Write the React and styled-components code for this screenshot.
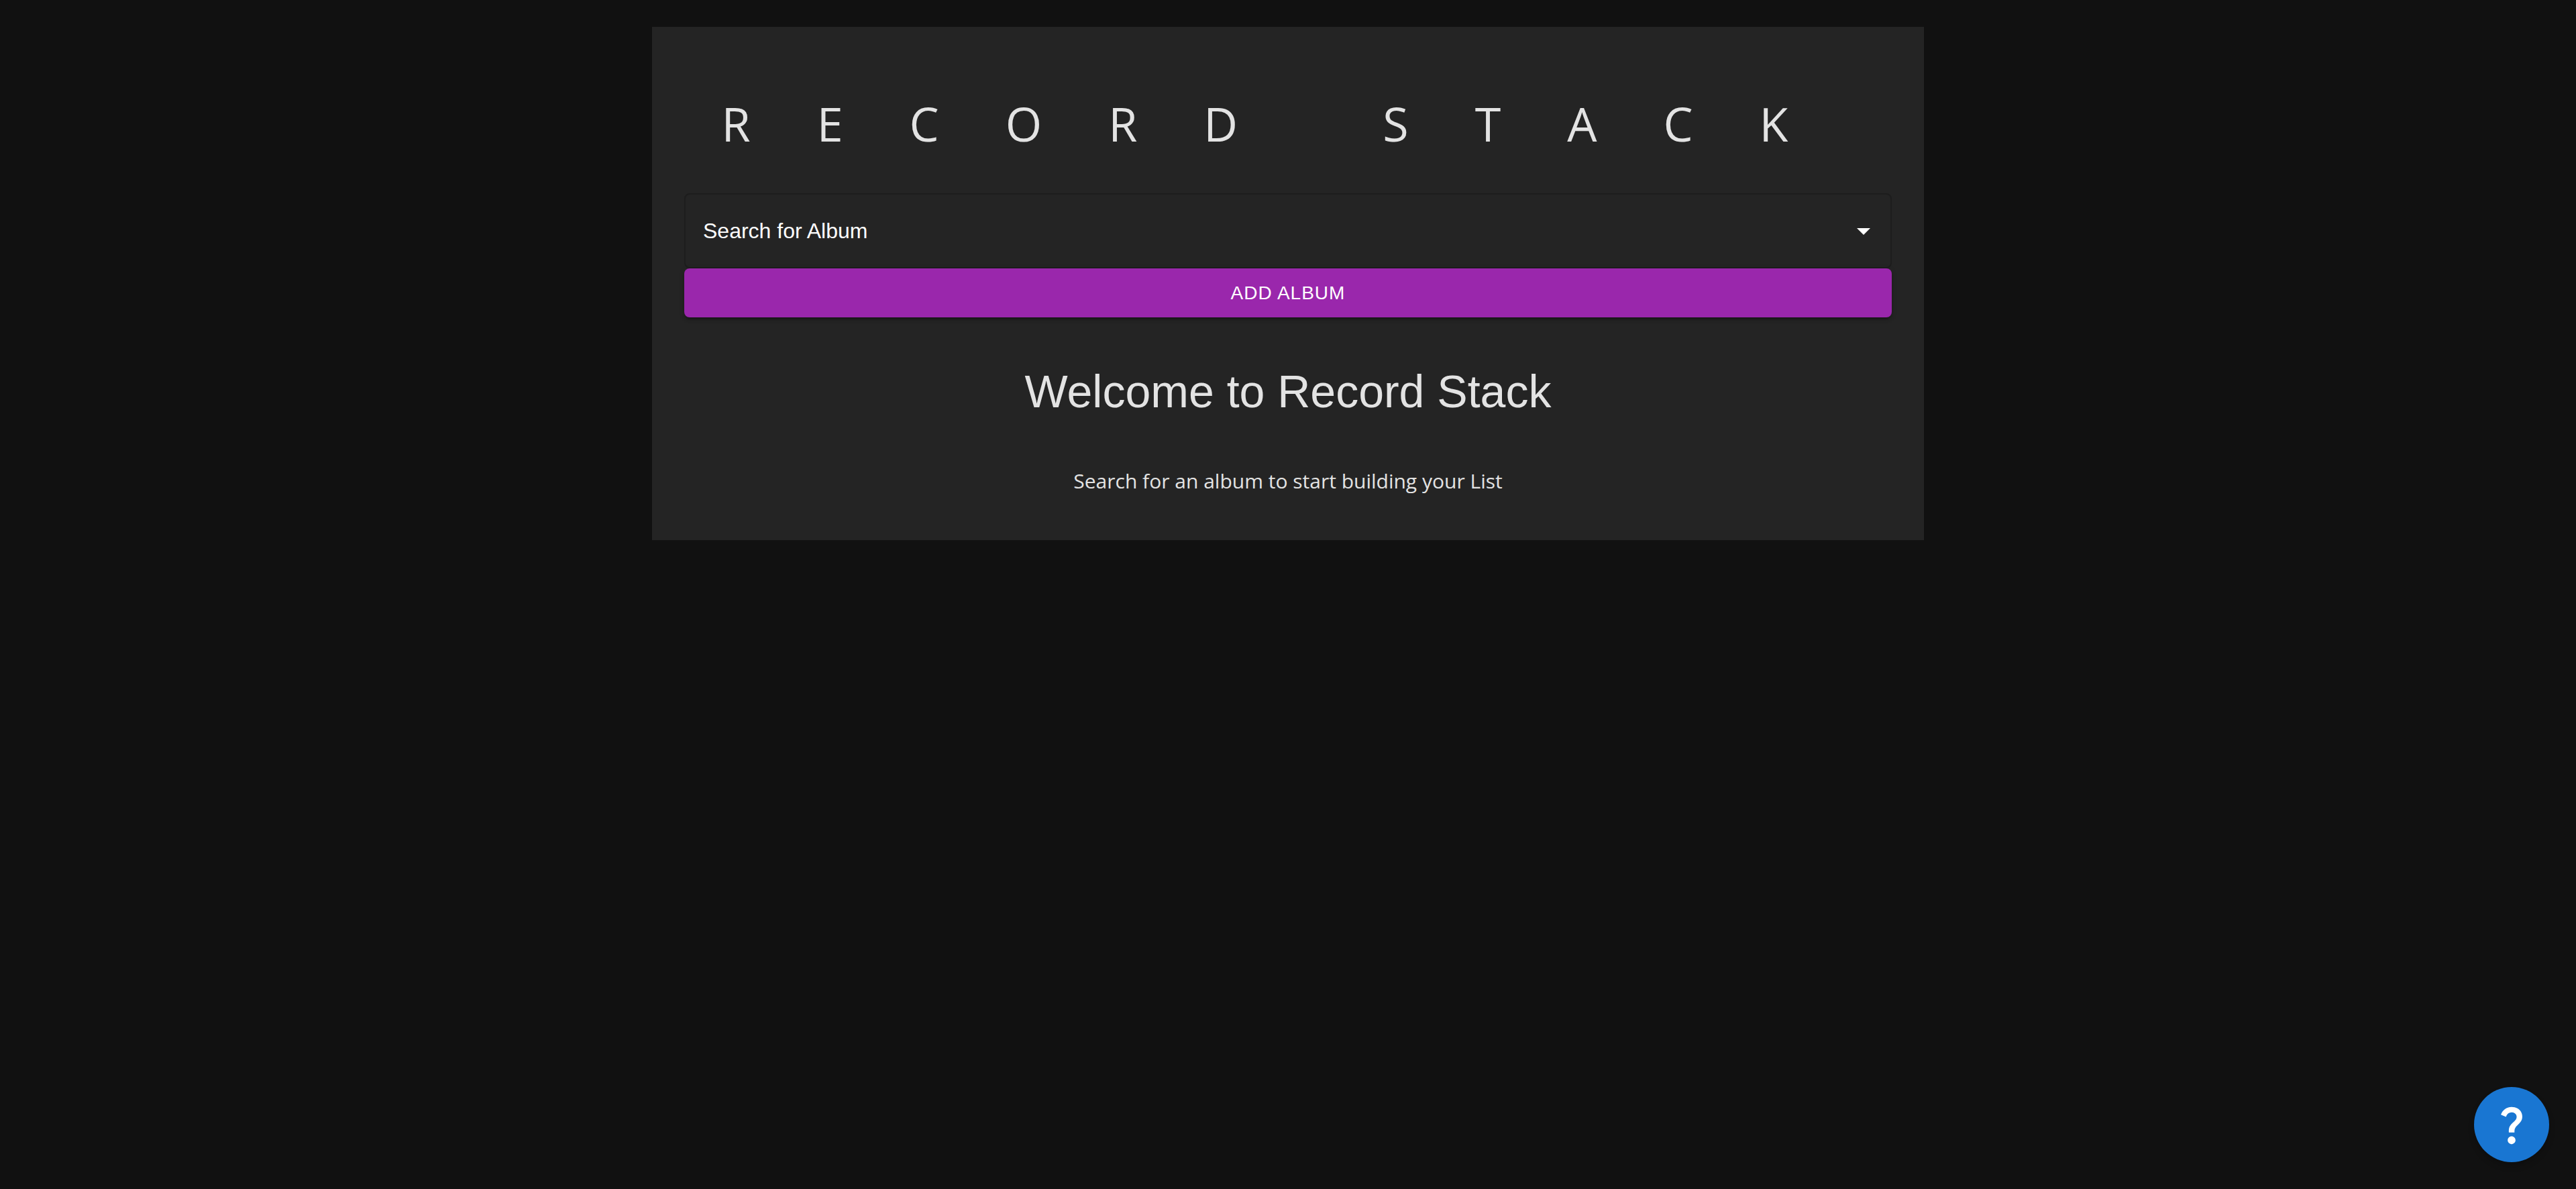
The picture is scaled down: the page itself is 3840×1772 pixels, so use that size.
import React from "react";
import styled, { createGlobalStyle } from "styled-components";

const sans = '"Liberation Sans", Arial, sans-serif';
const humanist = '"Open Sans", "Noto Sans", sans-serif';

const GlobalStyle = createGlobalStyle`
  *, *::before, *::after { box-sizing: border-box; }
  body {
    margin: 0;
    background: #111111;
    color: #e3e3e3;
    font-family: ${humanist};
    font-size: 30px;
  }
`;

const Page = styled.div`
  min-height: 100vh;
  padding: 40px;
`;

const Card = styled.main`
  display: flex;
  flex-direction: column;
  max-width: 1896px;
  margin: 0 auto;
  padding: 48px;
  background: #242424;
  text-align: center;
`;

const Title = styled.h1`
  margin: 48px 0 56px;
  font-size: 70px;
  font-weight: 400;
  line-height: 96px;
  letter-spacing: 99px;
  white-space: nowrap;
`;

const Form = styled.form`
  display: flex;
  flex-direction: column;
`;

const Field = styled.div`
  display: flex;
  align-items: center;
  height: 112px;
  padding: 0 16px 0 26px;
  border: 2px solid #1d1d1d;
  border-radius: 8px;
`;

const SearchInput = styled.input`
  flex: 1;
  min-width: 0;
  padding: 0;
  border: 0;
  outline: 0;
  background: transparent;
  color: #ffffff;
  font-family: ${sans};
  font-size: 32px;
  line-height: 46px;

  &::placeholder {
    color: #ffffff;
    opacity: 1;
  }
`;

const ToggleButton = styled.button`
  display: flex;
  padding: 0;
  border: 0;
  background: transparent;
  color: #ffffff;
  cursor: pointer;
`;

const Icon = styled.svg`
  display: block;
  width: ${({ $size }) => $size}px;
  height: ${({ $size }) => $size}px;
  fill: currentColor;
`;

const AddButton = styled.button`
  padding: 12px 32px;
  border: 0;
  border-radius: 8px;
  background: #9a27ac;
  box-shadow:
    0 6px 2px -4px rgba(0, 0, 0, 0.2),
    0 4px 4px 0 rgba(0, 0, 0, 0.14),
    0 2px 10px 0 rgba(0, 0, 0, 0.12);
  color: #ffffff;
  font-family: ${sans};
  font-size: 28px;
  line-height: 49px;
  letter-spacing: 1px;
  text-transform: uppercase;
  cursor: pointer;
`;

const Heading = styled.h2`
  margin: 68px 0;
  font-family: ${sans};
  font-size: 68px;
  font-weight: 400;
  line-height: 84px;
`;

const Hint = styled.p`
  margin: 0 0 16px;
  line-height: 48px;
`;

const HelpButton = styled.button`
  position: fixed;
  right: 40px;
  bottom: 40px;
  display: flex;
  align-items: center;
  justify-content: center;
  width: 112px;
  height: 112px;
  padding: 0;
  border: 0;
  border-radius: 50%;
  background: #1976d2;
  box-shadow: 0 6px 10px rgba(0, 0, 0, 0.2);
  color: #ffffff;
  cursor: pointer;
`;

function DropDownIcon() {
  return (
    <Icon $size={48} viewBox="0 0 24 24" aria-hidden="true">
      <path d="M7 10l5 5 5-5z" />
    </Icon>
  );
}

function QuestionIcon() {
  return (
    <Icon $size={70} viewBox="0 0 24 24" aria-hidden="true">
      <path d="M11.07 12.85c.77-1.39 2.25-2.21 3.11-3.44.91-1.29.4-3.7-2.18-3.7-1.69 0-2.52 1.28-2.87 2.34L6.54 6.96C7.25 4.83 9.18 3 11.99 3c2.35 0 3.96 1.07 4.78 2.41.7 1.15 1.11 3.3.03 4.9-1.2 1.77-2.35 2.31-2.97 3.45-.25.46-.35.76-.35 2.24h-2.89c-.01-.78-.13-2.05.48-3.15zM14 20c0 1.1-.9 2-2 2s-2-.9-2-2 .9-2 2-2 2 .9 2 2z" />
    </Icon>
  );
}

export default function App() {
  return (
    <Page>
      <GlobalStyle />
      <Card>
        <Title>RECORD STACK</Title>
        <Form onSubmit={(event) => event.preventDefault()}>
          <Field>
            <SearchInput
              type="text"
              role="combobox"
              aria-expanded="false"
              aria-label="Search for Album"
              placeholder="Search for Album"
            />
            <ToggleButton type="button" aria-label="Open">
              <DropDownIcon />
            </ToggleButton>
          </Field>
          <AddButton type="submit">Add Album</AddButton>
        </Form>
        <Heading>Welcome to Record Stack</Heading>
        <Hint>Search for an album to start building your List</Hint>
      </Card>
      <HelpButton type="button" aria-label="Help">
        <QuestionIcon />
      </HelpButton>
    </Page>
  );
}
